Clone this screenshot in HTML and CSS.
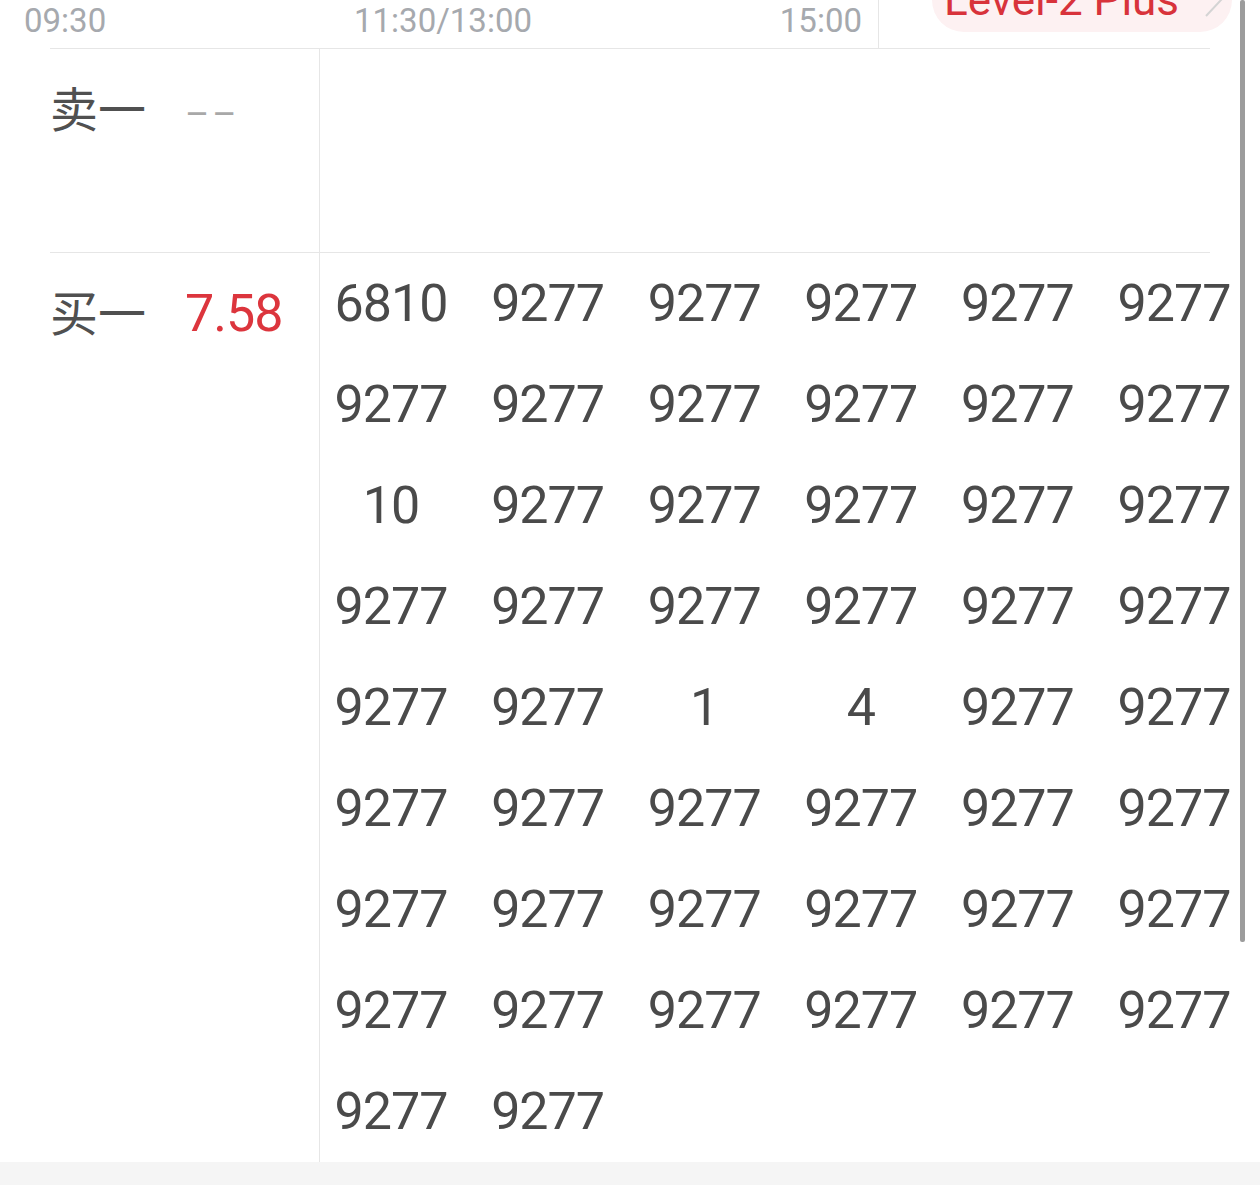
FILE: index.html
```html
<!DOCTYPE html>
<html>
<head>
    <title>买卖队列</title>
    <meta charset="utf-8">
    <meta name="viewport" content="width=device-width, initial-scale=1">
    <link rel="stylesheet" href="styles.css">
</head>
<body>
    <div class="axis">
        <div class="axis-labels">
            <span>09:30</span>
            <span>11:30/13:00</span>
            <span>15:00</span>
        </div>
        <div class="level2">
            <span class="level2-text">Level-2 Plus</span>
            <svg class="level2-arrow" width="20" height="36" viewBox="0 0 20 36">
                <polyline points="3,1 18,17 3,33" fill="none" stroke="#d4d4d4" stroke-width="2"/>
            </svg>
        </div>
    </div>

    <div class="book">
        <div class="book-row sell-row">
            <div class="side-label">
                <span class="side-name">卖一</span><span class="side-price empty">––</span>
            </div>
            <div class="queue"></div>
        </div>
        <div class="book-row buy-row">
            <div class="side-label">
                <span class="side-name">买一</span><span class="side-price up">7.58</span>
            </div>
            <div class="queue">
                <div class="queue-grid">
                    <span>6810</span><span>9277</span><span>9277</span><span>9277</span><span>9277</span><span>9277</span>
                    <span>9277</span><span>9277</span><span>9277</span><span>9277</span><span>9277</span><span>9277</span>
                    <span>10</span><span>9277</span><span>9277</span><span>9277</span><span>9277</span><span>9277</span>
                    <span>9277</span><span>9277</span><span>9277</span><span>9277</span><span>9277</span><span>9277</span>
                    <span>9277</span><span>9277</span><span>1</span><span>4</span><span>9277</span><span>9277</span>
                    <span>9277</span><span>9277</span><span>9277</span><span>9277</span><span>9277</span><span>9277</span>
                    <span>9277</span><span>9277</span><span>9277</span><span>9277</span><span>9277</span><span>9277</span>
                    <span>9277</span><span>9277</span><span>9277</span><span>9277</span><span>9277</span><span>9277</span>
                    <span>9277</span><span>9277</span>
                </div>
            </div>
        </div>
    </div>

    <div class="footer-band"></div>
    <div class="scrollbar"></div>
</body>
</html>
```

FILE: styles.css
```css
html, body {
    margin: 0;
    padding: 0;
}
body {
    width: 1260px;
    overflow: hidden;
    background-color: #fff;
    font-family: Roboto, "Noto Sans CJK SC", sans-serif;
    position: relative;
}
.axis {
    display: flex;
    height: 48px;
}
.axis-labels {
    width: 879px;
    box-sizing: border-box;
    height: 48px;
    padding: 0 16px 0 24px;
    border-right: 1px solid #e6e6e6;
    display: flex;
    justify-content: space-between;
    font-size: 33px;
    line-height: 42px;
    color: #a6a9ae;
}
.level2 {
    display: flex;
    align-items: center;
    margin: -32px 0 0 53px;
    height: 64px;
    width: 300px;
    box-sizing: border-box;
    padding: 0 8px 0 12px;
    background-color: #fdf1f2;
    border-radius: 32px;
}
.level2-text {
    font-size: 44px;
    line-height: 64px;
    color: #d8333b;
    white-space: nowrap;
}
.level2-arrow {
    margin-left: 24px;
    margin-top: 2px;
}
.book {
    margin: 0 50px;
    border-top: 1px solid #e6e6e6;
}
.book-row {
    display: flex;
}
.sell-row {
    height: 203px;
    border-bottom: 1px solid #e6e6e6;
}
.side-label {
    width: 269px;
    border-right: 1px solid #e6e6e6;
    padding-top: 27px;
    line-height: 60px;
    white-space: nowrap;
}
.side-name {
    display: inline-block;
    width: 135px;
    font-family: "Noto Sans CJK SC", sans-serif;
    font-size: 48px;
    color: #505050;
}
.side-price {
    font-size: 52px;
    letter-spacing: -1px;
}
.side-price.up {
    color: #dc353d;
}
.side-price.empty {
    font-size: 37px;
    color: #a8a8a8;
    letter-spacing: 3px;
}
.queue {
    flex: 1;
}
.queue-grid {
    display: grid;
    grid-template-columns: repeat(6, 142px);
    column-gap: 14.6px;
    grid-auto-rows: 101px;
    font-size: 52px;
    line-height: 101px;
    letter-spacing: -1px;
    color: #4a4a4a;
    text-align: center;
    margin-right: -60px;
}
.footer-band {
    height: 25px;
    background-color: #f5f5f5;
}
.scrollbar {
    position: absolute;
    top: 0;
    left: 1240px;
    width: 5px;
    height: 942px;
    background-color: #9c9c9c;
    border-radius: 2px;
}
```
